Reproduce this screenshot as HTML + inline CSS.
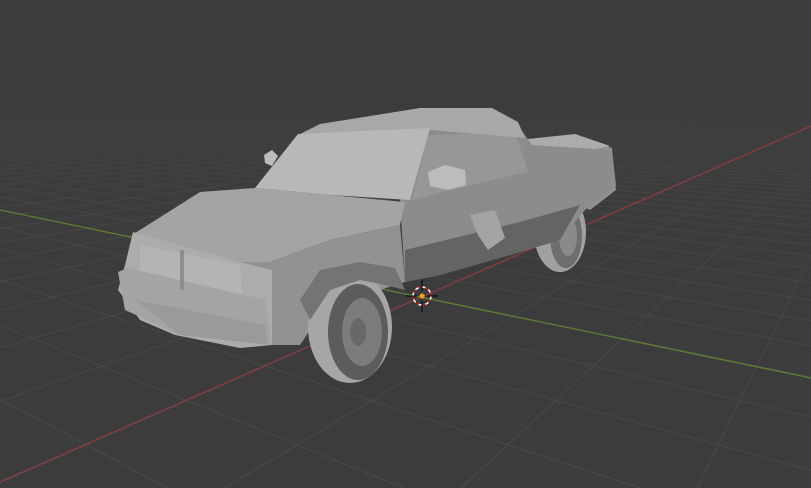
<!DOCTYPE html>
<html><head><meta charset="utf-8">
<style>html,body{margin:0;padding:0;background:#3d3d3d;overflow:hidden;width:811px;height:488px}svg{display:block;overflow:hidden}</style>
</head><body>
<svg id="s" width="811" height="488" viewBox="0 0 811 488" xmlns="http://www.w3.org/2000/svg">
<defs>
<linearGradient id="fg" x1="0" y1="0" x2="0" y2="1">
<stop offset="0" stop-color="#fff" stop-opacity="0"/>
<stop offset="0.2" stop-color="#fff" stop-opacity="0"/>
<stop offset="0.42" stop-color="#fff" stop-opacity="0.6"/>
<stop offset="1" stop-color="#fff" stop-opacity="1"/>
</linearGradient>
<mask id="m"><rect width="811" height="488" fill="url(#fg)"/></mask>
</defs>
<rect width="811" height="488" fill="#3c3c3c"/>
<g id="grid" mask="url(#m)" stroke="#4b4b4b" stroke-width="1" fill="none"></g>
<line x1="0" y1="482" x2="811" y2="126" stroke="#8a3b40" stroke-width="1.3"/>
<line x1="0" y1="210" x2="811" y2="378" stroke="#5f7f33" stroke-width="1.3"/>
<g stroke="none">
<ellipse cx="560" cy="232" rx="26" ry="40" fill="#a0a0a0"/>
<ellipse cx="566" cy="236" rx="16" ry="32" fill="#6e6e6e"/>
<ellipse cx="568" cy="236" rx="9" ry="20" fill="#8a8a8a"/>
<polygon points="518,140 580,136 612,148 616,190 590,210 560,195 530,180" fill="#909090"/>
<polygon points="518,140 575,134 610,146 540,160" fill="#acacac"/>
<polygon points="400,200 425,128 520,128 532,145 612,150 616,185 585,210 560,240 510,255 440,275 405,282" fill="#8c8c8c"/>
<polygon points="405,250 520,222 580,205 560,240 510,255 440,275 405,282" fill="#646464"/>
<polygon points="428,135 515,132 528,172 450,190 412,200" fill="#979797"/>
<polygon points="470,215 495,210 505,238 488,250 478,235" fill="#a4a4a4"/>
<polygon points="298,135 320,124 420,108 492,108 518,122 525,138 430,130" fill="#a8a8a8"/>
<polygon points="255,188 298,134 430,128 410,200 330,195" fill="#b8b8b8"/>
<polygon points="428,172 445,165 465,170 466,185 448,190 430,186" fill="#bcbcbc"/>
<polygon points="264,155 272,150 278,156 272,166 265,163" fill="#bcbcbc"/>
<polygon points="132,235 200,192 255,188 330,195 405,202 400,225 330,240 270,262 240,262" fill="#a4a4a4"/>
<polygon points="240,262 270,262 330,240 400,225 405,282 380,290 330,300 300,345 270,345" fill="#929292"/>
<polygon points="125,265 133,232 240,262 272,270 272,345 240,348 175,335 140,320 118,290" fill="#acacac"/>
<polygon points="140,245 240,265 242,300 140,285" fill="#b4b4b4"/>
<polygon points="118,272 128,268 265,300 272,345 180,335 125,310" fill="#a4a4a4"/>
<polygon points="135,300 265,325 268,345 180,335" fill="#9a9a9a"/>
<rect x="180" y="250" width="4" height="40" fill="#8e8e8e"/>
<ellipse cx="350" cy="327" rx="42" ry="56" fill="#a6a6a6"/>
<ellipse cx="358" cy="332" rx="30" ry="48" fill="#5c5c5c"/>
<ellipse cx="362" cy="332" rx="20" ry="34" fill="#7c7c7c"/>
<ellipse cx="358" cy="332" rx="8" ry="14" fill="#686868"/>
<polygon points="300,300 320,270 360,262 395,268 405,290 385,285 360,280 330,290 310,320" fill="#747474"/>
</g>
<g transform="translate(422,296)">
<circle r="9" fill="none" stroke="#fff" stroke-width="1.5" stroke-dasharray="4 3"/>
<circle r="9" fill="none" stroke="#b02020" stroke-width="1.5" stroke-dasharray="3 4" stroke-dashoffset="3.5"/>
<line x1="-16" y1="0" x2="-5" y2="0" stroke="#000"/><line x1="5" y1="0" x2="16" y2="0" stroke="#000"/>
<line x1="0" y1="-16" x2="0" y2="-5" stroke="#000"/><line x1="0" y1="5" x2="0" y2="16" stroke="#000"/>
<circle r="2.5" fill="#f0a020"/>
</g>
</svg>
<script>
(function(){
var g=document.getElementById('grid');
var O=[422,297],VX=[892,90],VY=[-583,90],k=12;
function P(X,Y){var d=k+X+Y;return [(k*O[0]+X*VX[0]+Y*VY[0])/d,(k*O[1]+X*VX[1]+Y*VY[1])/d];}
var s='';
for(var i=-40;i<=60;i++){
 var a=Math.max(-k-i+0.5,-60),b=400;
 var p=P(i,a),q=P(i,b);
 s+='<line x1="'+p[0]+'" y1="'+p[1]+'" x2="'+q[0]+'" y2="'+q[1]+'"/>';
 var p2=P(a,i),q2=P(400,i);
 s+='<line x1="'+p2[0]+'" y1="'+p2[1]+'" x2="'+q2[0]+'" y2="'+q2[1]+'"/>';
}
g.innerHTML=s;
})();
</script>
</body></html>
